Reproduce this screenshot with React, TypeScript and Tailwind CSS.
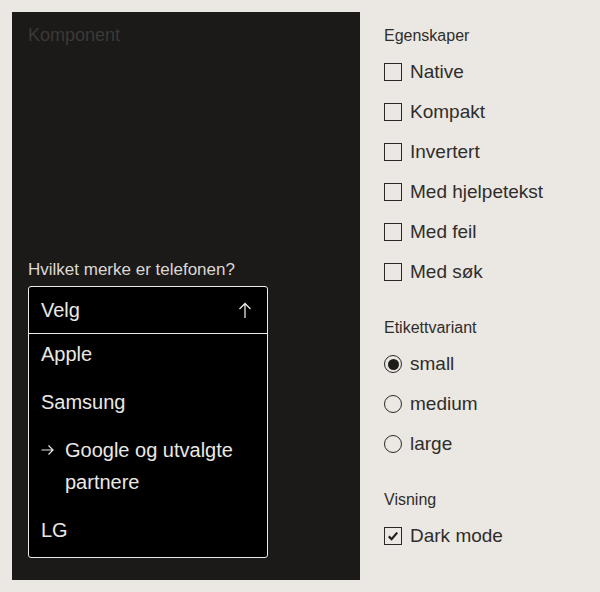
import React from "react";

const font = { fontFamily: '"Liberation Sans", Arial, sans-serif' };

const Checkbox = ({ label, checked = false }: { label: string; checked?: boolean }) => {
  return (
    <div className="flex h-10 items-center gap-2">
      <div className="flex h-[18px] w-[18px] items-center justify-center border-[1.5px] border-[#2a2826]">
        {checked && (
          <svg width="12" height="12" viewBox="0 0 12 12" fill="none">
            <path d="M1.8 6.4 L4.6 9.2 L10.2 2.6" stroke="#1f1d1b" strokeWidth="2.2" />
          </svg>
        )}
      </div>
      <span className="text-[19px] text-[#2f2d2b]">{label}</span>
    </div>
  );
};

const Radio = ({ label, checked = false }: { label: string; checked?: boolean }) => {
  return (
    <div className="flex h-10 items-center gap-2">
      <div className="flex h-[18px] w-[18px] items-center justify-center rounded-full border-[1.5px] border-[#2a2826]">
        {checked && <div className="h-[11px] w-[11px] rounded-full bg-[#1f1d1b]" />}
      </div>
      <span className="text-[19px] text-[#2f2d2b]">{label}</span>
    </div>
  );
};

const Section = ({ title, children }: { title: string; children: React.ReactNode }) => {
  return (
    <div className="flex flex-col gap-1">
      <div className="h-6 text-[16px] leading-6 text-[#2f2d2b]">{title}</div>
      <div className="flex flex-col">{children}</div>
    </div>
  );
};

export default function App() {
  return (
    <div className="flex h-[592px] w-[600px] gap-6 bg-[#ebe7e2] p-3" style={font}>
      <div className="flex w-[348px] flex-col bg-[#1b1a19] px-4 pt-[11px]">
        <div className="text-[18px] leading-6 text-[#3b3936]">Komponent</div>
        <div className="mt-[211px] text-[17px] leading-6 text-[#dcd8d3]">
          Hvilket merke er telefonen?
        </div>
        <div className="mt-1 w-[240px] rounded-[3px] border border-[#ecebe9] bg-black text-[20px] text-[#ebe8e4]">
          <div className="flex h-[47px] items-center justify-between border-b border-[#ecebe9] pl-3 pr-[15px]">
            <span>Velg</span>
            <svg width="14" height="17" viewBox="0 0 14 17" fill="none">
              <path d="M7 1.5 V16 M1.5 7 L7 1.5 L12.5 7" stroke="#ebe8e4" strokeWidth="1.3" />
            </svg>
          </div>
          <div className="flex flex-col">
            <div className="px-3 pt-1 pb-3 leading-8">Apple</div>
            <div className="px-3 pt-1 pb-3 leading-8">Samsung</div>
            <div className="flex gap-[11px] px-3 pt-1 pb-3 leading-8">
              <svg className="mt-[10px] shrink-0" width="13" height="12" viewBox="0 0 13 12" fill="none">
                <path d="M0.5 6 H12 M7.5 1.5 L12 6 L7.5 10.5" stroke="#ebe8e4" strokeWidth="1.2" />
              </svg>
              <span>Google og utvalgte partnere</span>
            </div>
            <div className="px-3 pt-1 pb-[11px] leading-8">LG</div>
          </div>
        </div>
      </div>
      <div className="flex flex-col gap-6 pt-3">
        <Section title="Egenskaper">
          <Checkbox label="Native" />
          <Checkbox label="Kompakt" />
          <Checkbox label="Invertert" />
          <Checkbox label="Med hjelpetekst" />
          <Checkbox label="Med feil" />
          <Checkbox label="Med søk" />
        </Section>
        <Section title="Etikettvariant">
          <Radio label="small" checked />
          <Radio label="medium" />
          <Radio label="large" />
        </Section>
        <Section title="Visning">
          <Checkbox label="Dark mode" checked />
        </Section>
      </div>
    </div>
  );
}
